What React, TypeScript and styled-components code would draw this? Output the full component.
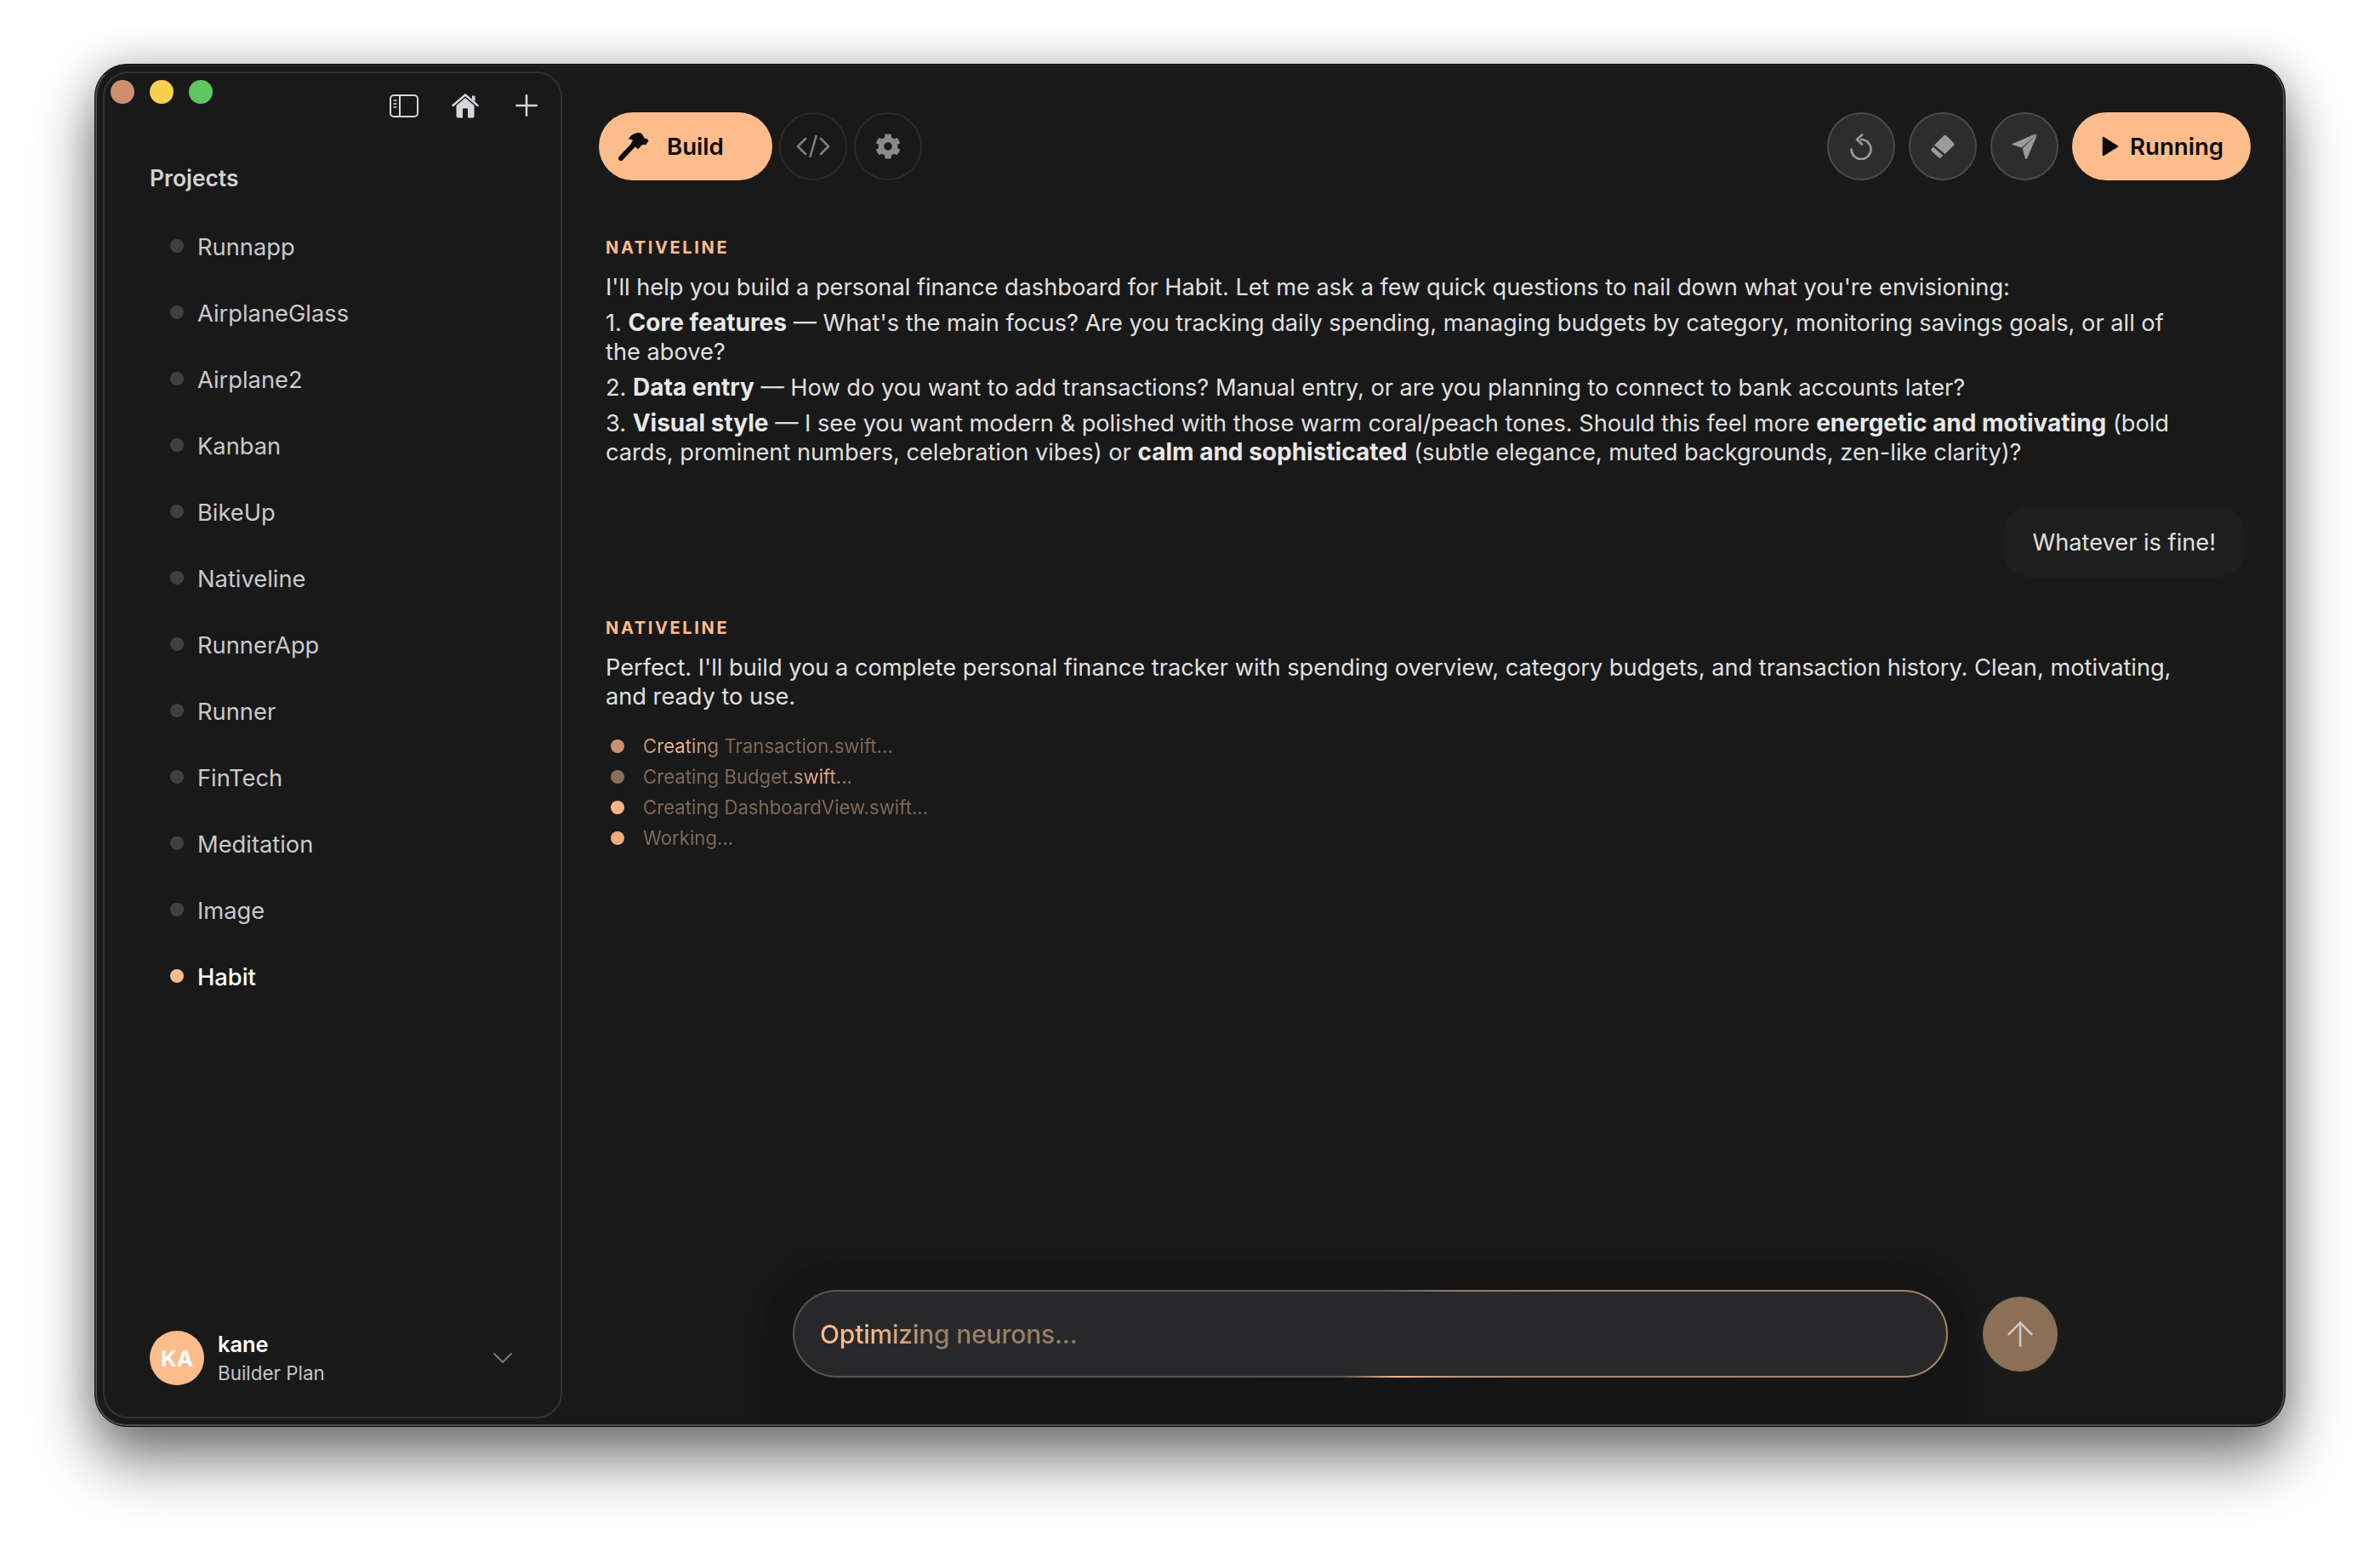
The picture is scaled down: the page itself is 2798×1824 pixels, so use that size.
import { createGlobalStyle, styled } from "styled-components";
import { ArrowUp, ChevronDown, Plus } from "lucide-react";
import { FaCog } from "react-icons/fa";

const PEACH = "#fdbc8b";

const projects = [
  "Runnapp",
  "AirplaneGlass",
  "Airplane2",
  "Kanban",
  "BikeUp",
  "Nativeline",
  "RunnerApp",
  "Runner",
  "FinTech",
  "Meditation",
  "Image",
  "Habit",
];

const GlobalStyle = createGlobalStyle`
  html, body {
    margin: 0;
    background: #fff;
  }
  body {
    font-family: Inter, "Liberation Sans", sans-serif;
  }
`;

const Stage = styled.div`
  width: 2798px;
  height: 1824px;
  padding: 75px 111px 0;
  box-sizing: border-box;
  overflow: hidden;
`;

const Window = styled.div`
  position: relative;
  width: 2576px;
  height: 1602px;
  box-sizing: border-box;
  display: flex;
  background: #191919;
  border: 1px solid #0a0a0a;
  border-radius: 38px;
  overflow: hidden;

  &::after {
    content: "";
    position: absolute;
    inset: 0;
    border: 2px solid #4c4c4c;
    border-top-color: #222;
    border-radius: 37px;
    pointer-events: none;
  }
`;

const WindowShadow = styled.div`
  border-radius: 38px;
  box-shadow: 0 40px 70px rgba(0, 0, 0, 0.5), 0 0 50px rgba(0, 0, 0, 0.22);
`;

const Sidebar = styled.aside`
  width: 540px;
  margin: 8px 0 9px 9px;
  box-sizing: border-box;
  flex: none;
  display: flex;
  flex-direction: column;
  border: 2px solid #333;
  border-radius: 30px;
`;

const SidebarHeader = styled.div`
  display: flex;
  justify-content: space-between;
  align-items: flex-start;
  padding: 8px 20px 0 7px;
`;

const TrafficLights = styled.div`
  display: flex;
  gap: 18px;
`;

const Light = styled.span<{ $color: string }>`
  width: 28px;
  height: 28px;
  border-radius: 50%;
  background: ${(p) => p.$color};
`;

const HeaderIcons = styled.div`
  display: flex;
  gap: 32px;
  margin-top: 10px;
  color: #d6d6da;
`;

const HeaderIcon = styled.span`
  width: 40px;
  height: 40px;
  display: flex;
  align-items: center;
  justify-content: center;
`;

const ProjectsTitle = styled.div`
  margin: 48px 0 25px 53px;
  font-size: 26.4px;
  line-height: 34px;
  font-weight: 600;
  color: #d2d2d6;
`;

const ProjectList = styled.ul`
  list-style: none;
  margin: 0;
  padding: 0 0 0 77px;
`;

const ProjectRow = styled.li<{ $active?: boolean }>`
  height: 78px;
  display: flex;
  align-items: center;
  gap: 16px;
  font-size: 27.3px;
  color: ${(p) => (p.$active ? "#fff" : "#c9c9cd")};
  font-weight: ${(p) => (p.$active ? 500 : 400)};
`;

const ProjectDot = styled.span<{ $active?: boolean }>`
  width: 16px;
  height: 16px;
  border-radius: 50%;
  margin-top: -2px;
  background: ${(p) => (p.$active ? PEACH : "#404040")};
`;

const UserFooter = styled.div`
  margin-top: auto;
  padding: 0 48px 37px 53px;
  display: flex;
  align-items: center;
`;

const Avatar = styled.div`
  width: 64px;
  height: 64px;
  border-radius: 50%;
  background: ${PEACH};
  color: #fff;
  font-size: 26px;
  font-weight: 700;
  display: flex;
  align-items: center;
  justify-content: center;
`;

const UserInfo = styled.div`
  margin: 2px 0 0 16px;
  flex: 1;
  display: flex;
  flex-direction: column;
  gap: 10px;
`;

const UserName = styled.div`
  font-size: 25.4px;
  line-height: 24px;
  font-weight: 600;
  color: #fff;
`;

const UserPlan = styled.div`
  font-size: 22.4px;
  line-height: 24px;
  color: #c4c4c8;
`;

const Main = styled.main`
  flex: 1;
  min-width: 0;
  display: flex;
  flex-direction: column;
`;

const Toolbar = styled.div`
  margin-top: 56px;
  padding: 0 40px 0 43px;
  display: flex;
  align-items: center;
`;

const PillButton = styled.button<{ $width: number }>`
  width: ${(p) => p.$width}px;
  height: 80px;
  border: 0;
  border-radius: 40px;
  background: ${PEACH};
  color: #0b0b0b;
  font-family: inherit;
  font-size: 27.6px;
  font-weight: 600;
  display: flex;
  align-items: center;
  padding: 0;
`;

const BuildButton = styled(PillButton)`
  gap: 21px;
  padding-left: 23px;
`;

const RunButton = styled(PillButton)`
  gap: 13px;
  padding-left: 35px;
`;

const GhostButton = styled.button`
  width: 80px;
  height: 80px;
  margin-left: 8px;
  padding: 0;
  border: 2px solid #2a2a2a;
  border-radius: 50%;
  background: transparent;
  color: #7e7e7e;
  display: flex;
  align-items: center;
  justify-content: center;
`;

const ToolbarRight = styled.div`
  margin-left: auto;
  display: flex;
  gap: 16px;
`;

const RoundButton = styled.button`
  width: 80px;
  height: 80px;
  padding: 0;
  border: 2px solid #4a4a4a;
  border-radius: 50%;
  background: #2d2d2d;
  color: #9a9a9a;
  display: flex;
  align-items: center;
  justify-content: center;
`;

const Thread = styled.section`
  flex: 1;
  padding: 67px 48px 0 51px;
  display: flex;
  flex-direction: column;
`;

const Sender = styled.div`
  font-size: 20px;
  line-height: 24px;
  font-weight: 700;
  letter-spacing: 2.65px;
  color: ${PEACH};
  margin-bottom: 18px;
`;

const Paragraphs = styled.div`
  max-width: 1862px;
  display: flex;
  flex-direction: column;
  gap: 8px;
  font-size: 27.2px;
  line-height: 34px;
  color: #e0e0e0;
`;

const Strong = styled.strong`
  font-size: 28px;
  line-height: 0;
  font-weight: 700;
  color: #e8e8e8;
`;

const UserBubble = styled.div`
  align-self: flex-end;
  height: 82px;
  margin: 47px 0 48px;
  padding: 0 33px;
  display: flex;
  align-items: center;
  border-radius: 28px;
  background: #1e1e1e;
  font-size: 27.2px;
  color: #e0e0e0;
`;

const StatusList = styled.ul`
  list-style: none;
  margin: 23px 0 0;
  padding: 0 0 0 6px;
`;

const StatusRow = styled.li`
  height: 36px;
  display: flex;
  align-items: center;
  gap: 22px;
`;

const StatusDot = styled.span<{ $color: string }>`
  width: 16px;
  height: 16px;
  border-radius: 50%;
  background: ${(p) => p.$color};
`;

const StatusText = styled.span<{ $glow?: [number, number, number] }>`
  font-size: 22.2px;
  line-height: 36px;
  color: transparent;
  -webkit-background-clip: text;
  background-clip: text;
  background-image: ${(p) =>
    p.$glow
      ? `linear-gradient(90deg, #806a58 ${p.$glow[0]}%, #ffbe90 ${p.$glow[1]}%, #806a58 ${p.$glow[2]}%)`
      : "linear-gradient(#806a58, #806a58)"};
`;

const Composer = styled.div`
  padding-left: 239px;
  display: flex;
  align-items: flex-start;
`;

const InputHalo = styled.div`
  width: 1410px;
  box-sizing: border-box;
  padding: 31px 20px 57px 32px;
  background: #151515;
  border-radius: 80px 80px 0 0;
  box-shadow: 0 0 14px 4px #151515;
`;

const InputField = styled.div`
  height: 103px;
  box-sizing: border-box;
  border: 2.5px solid transparent;
  border-radius: 52px;
  padding-left: 30px;
  display: flex;
  align-items: center;
  background:
    linear-gradient(#28282a, #28282a) padding-box,
    conic-gradient(
        #555350 0deg,
        #555350 15deg,
        #9a8068 70deg,
        #a58a70 104deg,
        #ffb98a 146deg,
        #5a5650 214deg,
        #555350 360deg
      )
      border-box;
`;

const InputText = styled.span`
  font-size: 30px;
  font-weight: 500;
  letter-spacing: -0.2px;
  color: transparent;
  -webkit-background-clip: text;
  background-clip: text;
  background-image: linear-gradient(90deg, #ffb98a 0%, #ffb98a 20%, #9a8068 46%, #9a8068 100%);
`;

const SendButton = styled.button`
  width: 88px;
  height: 88px;
  flex: none;
  margin: 39px 0 0 21px;
  padding: 0;
  border: 0;
  border-radius: 50%;
  background: #8c6f57;
  color: #c9c9c9;
  box-shadow: 0 0 30px rgba(255, 255, 255, 0.03);
  display: flex;
  align-items: center;
  justify-content: center;
`;

const SidebarGlyph = () => (
  <svg width="34" height="27" viewBox="0 0 34 27" fill="none" stroke="currentColor" strokeWidth="2">
    <rect x="1" y="1" width="32" height="25" rx="4" />
    <path d="M12 1v25" />
    <path d="M4.5 7h4M4.5 11h4M4.5 15h4" strokeWidth="1.6" />
  </svg>
);

const HomeGlyph = () => (
  <svg width="32" height="29" viewBox="0 0 32 29" fill="currentColor">
    <path d="M1.5 14 16 1.5 30.500 14" fill="none" stroke="currentColor" strokeWidth="2.400" strokeLinecap="round" strokeLinejoin="round" />
    <path d="M24 2.500h3.500v7L24 6.500z" />
    <path
      fillRule="evenodd"
      d="M16 5 26.500 14v12.500a2 2 0 0 1-2 2h-17a2 2 0 0 1-2-2V14zM13 18.500v10h6v-10a1 1 0 0 0-1-1h-4a1 1 0 0 0-1 1z"
    />
  </svg>
);

const HammerGlyph = () => (
  <svg width="36" height="33" viewBox="0 0 36 33" fill="currentColor">
    <path d="M3 30 19 13" stroke="currentColor" strokeWidth="6" strokeLinecap="round" />
    <path d="M12 7C15 2 20 0 24 0c2 0 3 .7 4 2l3 5 2-.5 2.500 3-3.500 5-2.500-.8-2.500 1.300-4 4.500-8-7.500 2-3c-1-1-3-1.500-5-1.500z" />
  </svg>
);

const CodeGlyph = () => (
  <svg width="40" height="26" viewBox="0 0 40 26" fill="none" stroke="currentColor" strokeWidth="2.600" strokeLinecap="round" strokeLinejoin="round">
    <path d="M11 4 2 13l9 9M29 4l9 9-9 9M23.500 1l-7 24" />
  </svg>
);

const UndoGlyph = () => (
  <svg width="26" height="31" viewBox="0 0 26 31" fill="none" stroke="currentColor" strokeWidth="2.600" strokeLinecap="round" strokeLinejoin="round">
    <path d="M13 7a11.500 11.500 0 1 1-11.500 11.500" />
    <path d="M14 1.500 8 7l6 5.500" />
  </svg>
);

const EraserGlyph = () => (
  <svg width="28" height="28" viewBox="0 0 28 28" fill="currentColor">
    <path d="M15 1.500a2.500 2.500 0 0 1 3.300 0l8.400 8.300a2.500 2.500 0 0 1 0 3.400L16.500 23 4 12.500z" />
    <path d="M2.800 14.500 14.200 24.800l-2 2.200a2.500 2.500 0 0 1-3.200 0L1 19.800a2.500 2.500 0 0 1 0-3.200z" />
  </svg>
);

const PlaneGlyph = () => (
  <svg width="30" height="30" viewBox="0 0 30 30" fill="currentColor" stroke="currentColor" strokeWidth="1.200" strokeLinejoin="round">
    <path d="M1 12.500 28 1 11.500 16z" />
    <path d="M29 2 13.500 17.500l3 11.500c.5.500 1 .3 1.200-.2z" />
  </svg>
);

const PlayGlyph = () => (
  <svg width="20" height="24" viewBox="0 0 20 24" fill="currentColor" stroke="currentColor" strokeWidth="1.500" strokeLinejoin="round">
    <path d="M1.500 1.500 18.500 12 1.500 22.500z" />
  </svg>
);

export default function App() {
  return (
    <>
      <GlobalStyle />
      <Stage>
        <WindowShadow>
          <Window>
            <Sidebar>
              <SidebarHeader>
                <TrafficLights>
                  <Light $color="#d08e70" />
                  <Light $color="#f8d04f" />
                  <Light $color="#5fc55f" />
                </TrafficLights>
                <HeaderIcons>
                  <HeaderIcon>
                    <SidebarGlyph />
                  </HeaderIcon>
                  <HeaderIcon>
                    <HomeGlyph />
                  </HeaderIcon>
                  <HeaderIcon>
                    <Plus size={40} strokeWidth={1.5} />
                  </HeaderIcon>
                </HeaderIcons>
              </SidebarHeader>
              <ProjectsTitle>Projects</ProjectsTitle>
              <ProjectList>
                {projects.map((name) => (
                  <ProjectRow key={name} $active={name === "Habit"}>
                    <ProjectDot $active={name === "Habit"} />
                    {name}
                  </ProjectRow>
                ))}
              </ProjectList>
              <UserFooter>
                <Avatar>KA</Avatar>
                <UserInfo>
                  <UserName>kane</UserName>
                  <UserPlan>Builder Plan</UserPlan>
                </UserInfo>
                <ChevronDown size={40} strokeWidth={1.2} color="#7a7a7a" />
              </UserFooter>
            </Sidebar>
            <Main>
              <Toolbar>
                <BuildButton $width={204}>
                  <HammerGlyph />
                  Build
                </BuildButton>
                <GhostButton>
                  <CodeGlyph />
                </GhostButton>
                <GhostButton>
                  <FaCog size={30} color="#8a8a8a" />
                </GhostButton>
                <ToolbarRight>
                  <RoundButton>
                    <UndoGlyph />
                  </RoundButton>
                  <RoundButton>
                    <EraserGlyph />
                  </RoundButton>
                  <RoundButton>
                    <PlaneGlyph />
                  </RoundButton>
                  <RunButton $width={210}>
                    <PlayGlyph />
                    Running
                  </RunButton>
                </ToolbarRight>
              </Toolbar>
              <Thread>
                <Sender>NATIVELINE</Sender>
                <Paragraphs>
                  <div>
                    I'll help you build a personal finance dashboard for Habit. Let me ask a few quick questions to nail
                    down what you're envisioning:
                  </div>
                  <div>
                    1. <Strong>Core features</Strong> — What's the main focus? Are you tracking daily spending, managing
                    budgets by category, monitoring savings goals, or all of the above?
                  </div>
                  <div>
                    2. <Strong>Data entry</Strong> — How do you want to add transactions? Manual entry, or are you
                    planning to connect to bank accounts later?
                  </div>
                  <div>
                    3. <Strong>Visual style</Strong> — I see you want modern &amp; polished with those warm coral/peach
                    tones. Should this feel more <Strong>energetic and motivating</Strong> (bold cards, prominent
                    numbers, celebration vibes) or <Strong>calm and sophisticated</Strong> (subtle elegance, muted
                    backgrounds, zen-like clarity)?
                  </div>
                </Paragraphs>
                <UserBubble>Whatever is fine!</UserBubble>
                <Sender>NATIVELINE</Sender>
                <Paragraphs>
                  <div>
                    Perfect. I'll build you a complete personal finance tracker with spending overview, category
                    budgets, and transaction history. Clean, motivating, and ready to use.
                  </div>
                </Paragraphs>
                <StatusList>
                  <StatusRow>
                    <StatusDot $color="#cf9070" />
                    <StatusText $glow={[-12, 14, 34]}>Creating Transaction.swift...</StatusText>
                  </StatusRow>
                  <StatusRow>
                    <StatusDot $color="#8a6f58" />
                    <StatusText $glow={[66, 84, 100]}>Creating Budget.swift...</StatusText>
                  </StatusRow>
                  <StatusRow>
                    <StatusDot $color="#f8b586" />
                    <StatusText>Creating DashboardView.swift...</StatusText>
                  </StatusRow>
                  <StatusRow>
                    <StatusDot $color="#f2ab7e" />
                    <StatusText>Working...</StatusText>
                  </StatusRow>
                </StatusList>
              </Thread>
              <Composer>
                <InputHalo>
                  <InputField>
                    <InputText>Optimizing neurons...</InputText>
                  </InputField>
                </InputHalo>
                <SendButton>
                  <ArrowUp size={46} strokeWidth={1.3} />
                </SendButton>
              </Composer>
            </Main>
          </Window>
        </WindowShadow>
      </Stage>
    </>
  );
}
